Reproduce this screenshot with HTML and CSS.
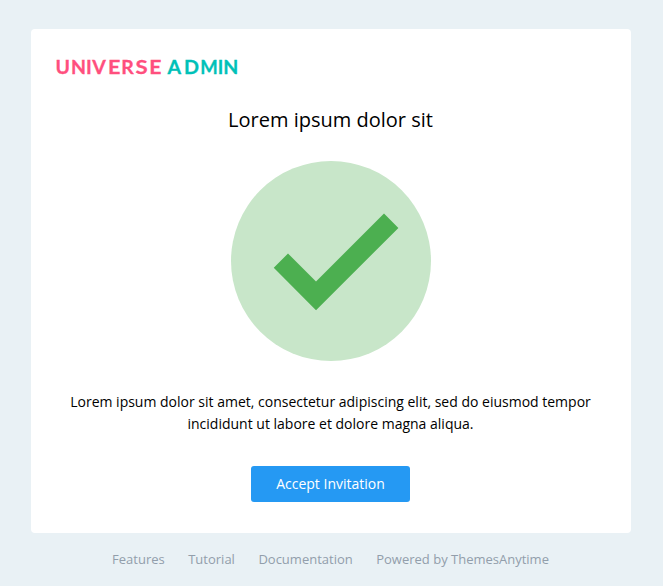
FILE: index.html
```html
<!DOCTYPE html>
<html lang="en">
<head>
<meta charset="utf-8">
<title>Universe Admin</title>
<link rel="stylesheet" href="styles.css">
</head>
<body>
<main class="card">
  <div class="logo"><svg width="183" height="24" viewBox="0 0 183 24" role="img" aria-label="Universe Admin"><text class="brand" y="18"><tspan x="-0.4 15.1 30 36.2">UNIV</tspan><tspan x="52" textLength="12.4" lengthAdjust="spacingAndGlyphs">E</tspan><tspan x="65.3">R</tspan><tspan x="79.5" textLength="12.2" lengthAdjust="spacingAndGlyphs">S</tspan><tspan x="93.3" textLength="12.2" lengthAdjust="spacingAndGlyphs">E</tspan></text><text class="brand accent" y="18"><tspan x="111.500">A</tspan><tspan x="128.100" textLength="15" lengthAdjust="spacingAndGlyphs">D</tspan><tspan x="144.200" textLength="23" lengthAdjust="spacingAndGlyphs">MI</tspan><tspan x="167.200">N</tspan></text></svg></div>
  <h1 class="title">Lorem ipsum dolor sit</h1>
  <svg class="check" viewBox="0 0 200 200" aria-hidden="true"><circle cx="100" cy="100" r="100" fill="#c8e6c9"/><path fill="#4caf50" d="M153 52.500 85 120.500 57 92.500 42.750 106.750 85 149.300 167.400 66.900z"/></svg>
  <p class="message">Lorem ipsum dolor sit amet, consectetur adipiscing elit, sed do eiusmod tempor incididunt ut labore et dolore magna aliqua.</p>
  <a class="button" href="#">Accept Invitation</a>
</main>
<footer class="footer">
  <a href="#">Features</a><a href="#">Tutorial</a><a href="#">Documentation</a><a href="#">Powered by ThemesAnytime</a>
</footer>
</body>
</html>
```
FILE: styles.css
```css
* { box-sizing: border-box; }
body { margin: 0; padding: 29px 32px 0 31px; height: 586px; background: #e9f1f5; color: #000; font-family: "Open Sans", sans-serif; font-size: 14px; }
.card { display: flex; flex-direction: column; align-items: center; height: 504px; padding: 27px 25px 0; background: #fff; border-radius: 4px; }
.logo { align-self: flex-start; height: 24px; }
.logo svg { display: block; overflow: visible; }
.brand { font-family: Lato, sans-serif; font-size: 19.5px; font-weight: 700; fill: #ff4f7e; stroke: #ff4f7e; stroke-width: 0.3px; }
.accent { fill: #00c1b8; stroke: #00c1b8; }
.title { margin: 26px 1px 0 0; font-size: 20px; line-height: 28px; font-weight: 400; }
.check { width: 200px; height: 200px; margin-top: 27px; flex: none; }
.message { width: 549px; margin: 30px 1px 0 0; line-height: 22px; text-align: center; }
.button { width: 159px; height: 36px; margin: 31px 1px 0 0; border-radius: 3px; background: #2599f3; color: #fff; line-height: 36px; text-align: center; text-decoration: none; }
.footer { display: flex; justify-content: center; gap: 23.5px; margin: 16px 1px 0 0; font-size: 13px; line-height: 20px; }
.footer a { color: #929eab; text-decoration: none; }
```
